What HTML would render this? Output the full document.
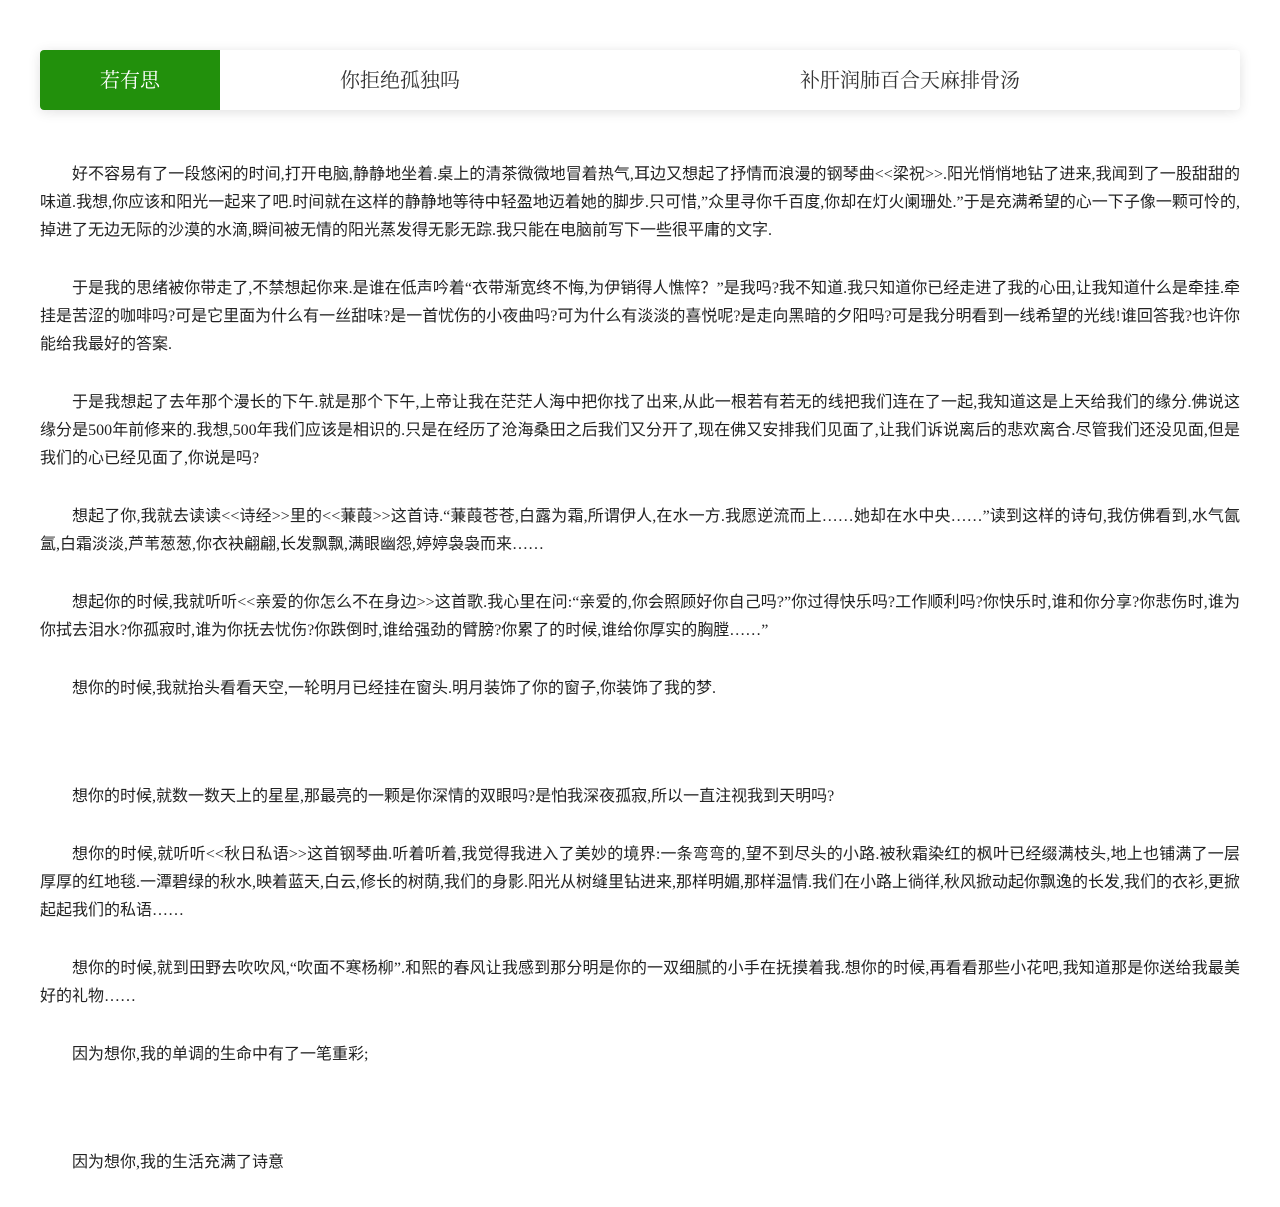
<!DOCTYPE html>
<html><head><meta charset="utf-8">
<style>
html,body{margin:0;padding:0;background:#fff;}
body{width:1280px;height:1167px;overflow:hidden;font-family:"Liberation Serif","WenQuanYi Zen Hei","Noto Sans CJK SC",serif;color:#222;}
.tabs{position:absolute;left:40px;top:50px;width:1200px;height:60px;background:#fff;border-radius:4px;box-shadow:0 2px 12px rgba(0,0,0,0.12);display:flex;font-size:20px;font-family:"Liberation Serif","Noto Serif CJK SC",serif;}
.tabs div{height:60px;line-height:62px;text-align:center;color:#333;}
.t1{width:180px;background:#22900c;color:#fff!important;border-radius:4px 0 0 4px;}
.t2{width:360px;}
.t3{width:660px;}
.content{position:absolute;left:40px;top:161px;width:1200px;font-size:16px;line-height:28px;}
.content p{margin:0 0 30px;text-indent:2em;text-align:justify;}
.sp{height:50px;}
</style></head><body>
<div class="tabs"><div class="t1">若有思</div><div class="t2">你拒绝孤独吗</div><div class="t3">补肝润肺百合天麻排骨汤</div></div>
<div class="content">
<p>好不容易有了一段悠闲的时间,打开电脑,静静地坐着.桌上的清茶微微地冒着热气,耳边又想起了抒情而浪漫的钢琴曲&lt;&lt;梁祝&gt;&gt;.阳光悄悄地钻了进来,我闻到了一股甜甜的味道.我想,你应该和阳光一起来了吧.时间就在这样的静静地等待中轻盈地迈着她的脚步.只可惜,”众里寻你千百度,你却在灯火阑珊处.”于是充满希望的心一下子像一颗可怜的,掉进了无边无际的沙漠的水滴,瞬间被无情的阳光蒸发得无影无踪.我只能在电脑前写下一些很平庸的文字.</p>
<p>于是我的思绪被你带走了,不禁想起你来.是谁在低声吟着“衣带渐宽终不悔,为伊销得人憔悴？”是我吗?我不知道.我只知道你已经走进了我的心田,让我知道什么是牵挂.牵挂是苦涩的咖啡吗?可是它里面为什么有一丝甜味?是一首忧伤的小夜曲吗?可为什么有淡淡的喜悦呢?是走向黑暗的夕阳吗?可是我分明看到一线希望的光线!谁回答我?也许你能给我最好的答案.</p>
<p>于是我想起了去年那个漫长的下午.就是那个下午,上帝让我在茫茫人海中把你找了出来,从此一根若有若无的线把我们连在了一起,我知道这是上天给我们的缘分.佛说这缘分是500年前修来的.我想,500年我们应该是相识的.只是在经历了沧海桑田之后我们又分开了,现在佛又安排我们见面了,让我们诉说离后的悲欢离合.尽管我们还没见面,但是我们的心已经见面了,你说是吗?</p>
<p>想起了你,我就去读读&lt;&lt;诗经&gt;&gt;里的&lt;&lt;蒹葭&gt;&gt;这首诗.“蒹葭苍苍,白露为霜,所谓伊人,在水一方.我愿逆流而上……她却在水中央……”读到这样的诗句,我仿佛看到,水气氤氲,白霜淡淡,芦苇葱葱,你衣袂翩翩,长发飘飘,满眼幽怨,婷婷袅袅而来……</p>
<p>想起你的时候,我就听听&lt;&lt;亲爱的你怎么不在身边&gt;&gt;这首歌.我心里在问:“亲爱的,你会照顾好你自己吗?”你过得快乐吗?工作顺利吗?你快乐时,谁和你分享?你悲伤时,谁为你拭去泪水?你孤寂时,谁为你抚去忧伤?你跌倒时,谁给强劲的臂膀?你累了的时候,谁给你厚实的胸膛……”</p>
<p>想你的时候,我就抬头看看天空,一轮明月已经挂在窗头.明月装饰了你的窗子,你装饰了我的梦.</p>
<div class="sp"></div>
<p>想你的时候,就数一数天上的星星,那最亮的一颗是你深情的双眼吗?是怕我深夜孤寂,所以一直注视我到天明吗?</p>
<p>想你的时候,就听听&lt;&lt;秋日私语&gt;&gt;这首钢琴曲.听着听着,我觉得我进入了美妙的境界:一条弯弯的,望不到尽头的小路.被秋霜染红的枫叶已经缀满枝头,地上也铺满了一层厚厚的红地毯.一潭碧绿的秋水,映着蓝天,白云,修长的树荫,我们的身影.阳光从树缝里钻进来,那样明媚,那样温情.我们在小路上徜徉,秋风掀动起你飘逸的长发,我们的衣衫,更掀起起我们的私语……</p>
<p>想你的时候,就到田野去吹吹风,“吹面不寒杨柳”.和熙的春风让我感到那分明是你的一双细腻的小手在抚摸着我.想你的时候,再看看那些小花吧,我知道那是你送给我最美好的礼物……</p>
<p>因为想你,我的单调的生命中有了一笔重彩;</p>
<div class="sp"></div>
<p>因为想你,我的生活充满了诗意</p>
</div>
</body></html>
